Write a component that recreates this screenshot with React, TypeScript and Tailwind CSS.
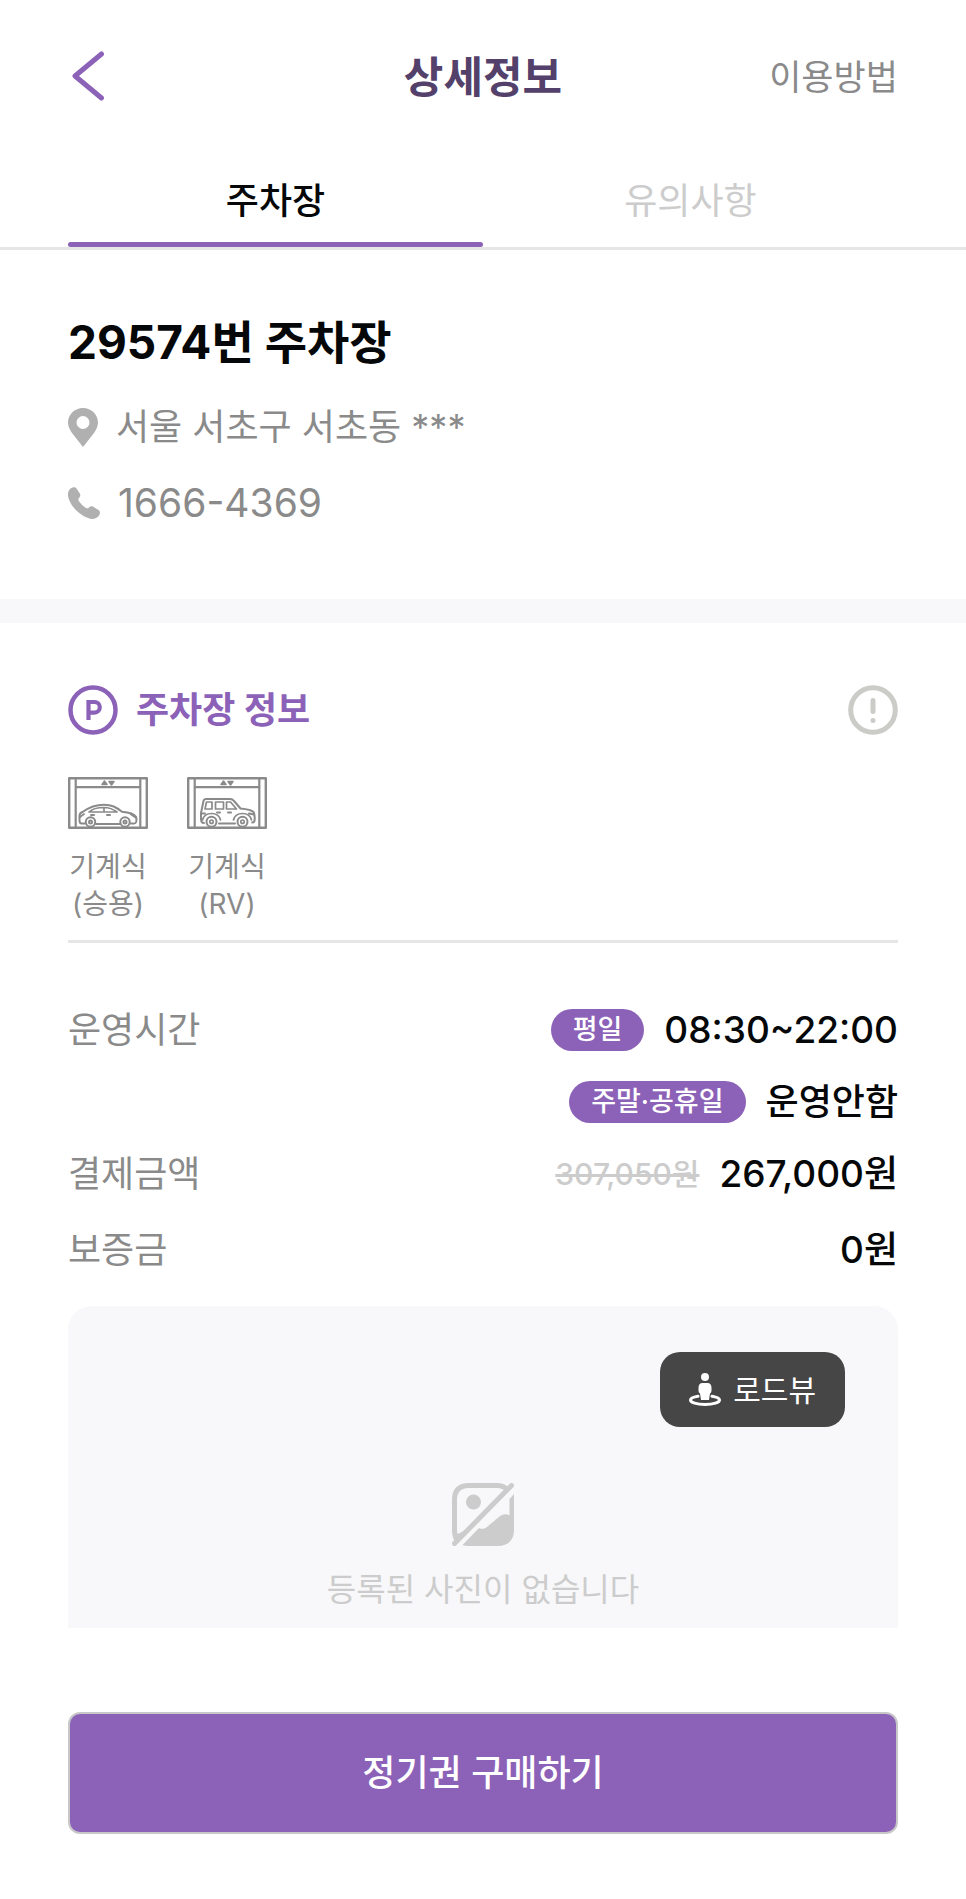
import { useState } from 'react';

const tabs = [
  { id: 'lot', label: '주차장' },
  { id: 'notice', label: '유의사항' }
];

function LiftFrame({ children }: { children: React.ReactNode }) {
  return (
    <svg viewBox="0 0 80 52" className="w-20 h-[52px]" fill="none" stroke="#8a8a8a" strokeWidth="2" strokeLinejoin="round" strokeLinecap="round" aria-hidden="true">
      <rect x="1.200" y="1.200" width="77.600" height="49.600" strokeWidth="2.400" />
      <path d="M7.700 1v50M72.300 1v50M8 10.200h64" strokeWidth="2.200" />
      <path d="M34 7.500h5l-2.500-3.500zM41 4.500h5L43.500 8z" fill="#8a8a8a" strokeWidth="1.500" />
      {children}
    </svg>
  );
}

function SedanIcon() {
  return (
    <LiftFrame>
      <path d="M17.500 46.500h-4c-1.500 0-2-1-2-3v-4.500c0-2 .7-3.300 3-4C20 31 26 27.700 36 27.700c8 0 12 2.500 18 7 7 .6 12 2 14 5 .7 2 .6 4 .2 5.300-.4 1-1.200 1.500-2.200 1.500h-3.500M28 47h24" />
      <path d="M21 35c3.500-3.500 8-4.500 15-4.500 6 0 9 1.500 13 4.500zM36 31v4M12 40l4-3M62.500 37l5 3.500" strokeWidth="1.700" />
      <path d="M23 38h3M39 38h3" />
      <circle cx="22.500" cy="45" r="4.700" />
      <circle cx="22.500" cy="45" r="1.500" />
      <circle cx="57" cy="45" r="4.700" />
      <circle cx="57" cy="45" r="1.500" />
    </LiftFrame>
  );
}

function RvIcon() {
  return (
    <LiftFrame>
      <path d="M17 46c-2 0-3-1.500-3-4v-6l2.500-12c.4-1.500 1-2 2.500-2h24c2 0 3 .6 4 2l6.500 7.500c6 .6 11 1.500 13 3.500 1 1.500 1.200 4 1.200 7.500 0 2-.6 3-2.500 3M32 46.500h16" />
      <path d="M19.500 25h5.500v7h-7zM28.500 25h8v7h-8zM39.500 25h4l6 7h-10z" strokeWidth="1.700" />
      <path d="M30 35.500h3M41 35.500h3M14 36.500h4M62 36.500l5 1" />
      <path d="M15.500 43c1-4 4.500-6.500 9-6.500s8 2.500 9 6.500M46.500 43c1-4 4.500-6.500 9-6.500s8 2.500 9 6.500" strokeWidth="1.700" />
      <circle cx="24.500" cy="44.700" r="5" />
      <circle cx="24.500" cy="44.700" r="1.700" strokeWidth="1.700" />
      <circle cx="55.500" cy="44.700" r="5" />
      <circle cx="55.500" cy="44.700" r="1.700" strokeWidth="1.700" />
    </LiftFrame>
  );
}

function PinIcon() {
  return (
    <svg viewBox="0 0 30 39" className="w-[30px] h-[39px]" fill="#b0b0b0" aria-hidden="true">
      <path fillRule="evenodd" d="M15 0C6.700 0 0 6.700 0 14.500 0 18.500 1.800 21.600 4 25l11 14 11-14c2.200-3.400 4-6.500 4-10.500C30 6.700 23.300 0 15 0zm0 8a6.500 6.500 0 1 1 0 13 6.500 6.500 0 0 1 0-13z" />
    </svg>
  );
}

function PhoneIcon() {
  return (
    <svg viewBox="0 0 32 32" className="w-8 h-8" fill="#b0b0b0" aria-hidden="true">
      <path d="M3 1.200C4.800 0 7.200-.3 8.500 1.400l3.300 5c1 1.800.5 3.200-.6 4.400-1 1-1.200 1.800-.5 2.900 1.800 2.900 4.300 5.400 7.400 7.200 1.100.6 1.900.4 2.900-.5 1.300-1.100 2.700-1.500 4.300-.6l5.200 3.300c1.900 1.300 1.700 3.600.5 5.400-2.400 3.400-6.400 4.300-11 2.600C10.800 27.400 4 20.500.9 12.300-.8 7.800-.3 3.600 3 1.200z" />
    </svg>
  );
}

function ParkingIcon() {
  return (
    <svg viewBox="0 0 50 50" className="w-[50px] h-[50px]" fill="none" stroke="#8c62b8" aria-hidden="true">
      <circle cx="25" cy="25" r="22.500" strokeWidth="4.500" />
      <path d="M20.500 35V17h6a5.300 5.300 0 0 1 0 10.600h-6" strokeWidth="4.200" />
    </svg>
  );
}

function RoadviewIcon() {
  return (
    <svg viewBox="0 0 32 33" className="w-8 h-[33px]" fill="#fff" aria-hidden="true">
      <circle cx="16" cy="4" r="4" />
      <path d="M13.500 10h5c2.500 0 4 1.800 4 4.500v3c0 1.500-.7 2.500-1.500 3l-1 6.500h-8l-1-6.500c-.8-.5-1.500-1.500-1.500-3v-3c0-2.700 1.500-4.500 4-4.500z" />
      <path d="M9 23.300c-4.500.8-7.500 2-7.500 3.700 0 2.500 6 4.500 14.500 4.500s14.500-2 14.500-4.500c0-1.700-3-2.900-7.500-3.700" fill="none" stroke="#fff" strokeWidth="3" strokeLinecap="round" />
    </svg>
  );
}

function NoPhotoIcon() {
  return (
    <svg viewBox="0 0 62 63" className="w-[62px] h-[63px]" aria-hidden="true">
      <path d="M5 57c-2-3-2.500-6-2.500-10V17C2.500 7.500 7.500 2.500 17 2.500h28c5 0 8 1.500 11 4.500" fill="none" stroke="#ccc" strokeWidth="5" />
      <circle cx="21.500" cy="19" r="7.500" fill="#ccc" />
      <path d="M4 53c6-1 11-5 17-11L56 7" fill="none" stroke="#ccc" strokeWidth="3" />
      <path d="M2.500 60.500l57-58" stroke="#ccc" strokeWidth="5" strokeLinecap="round" />
      <path d="M62 11v36c0 10-6 16-16 16H17c-3 0-5-.4-6.500-1L27 45c3 1.500 5.500 1 8.500-1.500l12-10c3.500-2.700 7-3 10-1V16z" fill="#ccc" />
    </svg>
  );
}

function Badge({ children }: { children: React.ReactNode }) {
  return (
    <span className="h-[42px] px-[22px] flex items-center rounded-full bg-[#8c62b8] text-white text-[27px] font-medium">
      {children}
    </span>
  );
}

export default function App() {
  const [activeTab, setActiveTab] = useState('lot');

  return (
    <div className="bg-white text-[#050708] text-[36px] leading-[44px] font-[Inter,'Noto_Sans_CJK_KR',sans-serif]">
      <header className="grid grid-cols-3 items-center h-[152px] px-[68px]">
        <button aria-label="뒤로" className="justify-self-start pl-1">
          <svg viewBox="0 0 34 50" className="w-[34px] h-[50px]" fill="none" stroke="#8c62b8" strokeWidth="5" strokeLinecap="round" strokeLinejoin="round">
            <path d="M29.500 3L3 25l26.500 22" />
          </svg>
        </button>
        <h1 className="pt-0.5 text-center text-[43px] font-bold text-[#53416b]">상세정보</h1>
        <button className="justify-self-end pt-0.5 text-[35px] text-[#8a8a8a]">이용방법</button>
      </header>

      <nav className="flex px-[68px] border-b-[3px] border-[#e6e6e6]">
        {tabs.map((tab) => (
          <button
            key={tab.id}
            onClick={() => setActiveTab(tab.id)}
            className={`flex-1 flex flex-col ${
              activeTab === tab.id ? 'text-[#050708] font-medium' : 'text-[#ccc]'
            }`}
          >
            <span className="w-full h-[90px] pt-2 flex items-center justify-center">{tab.label}</span>
            <span className={`w-full h-[5px] rounded-sm ${activeTab === tab.id ? 'bg-[#8c62b8]' : ''}`} />
          </button>
        ))}
      </nav>

      <section className="px-[68px] pt-[60px] pb-[74px] text-[#8a8a8a]">
        <h2 className="text-[46px] leading-[64px] font-bold text-[#050708]">29574번 주차장</h2>
        <p className="mt-[31px] flex items-center gap-[18px]">
          <PinIcon />
          <span>서울 서초구 서초동 ***</span>
        </p>
        <p className="mt-8 flex items-center gap-[18px]">
          <PhoneIcon />
          <a href="tel:1666-4369" className="text-[39px]">1666-4369</a>
        </p>
      </section>

      <div className="h-6 bg-[#f8f8fa]" />

      <section className="px-[68px] pt-[62px]">
        <div className="flex items-center justify-between">
          <h3 className="flex items-center gap-[18px] text-[#8c62b8] font-bold">
            <ParkingIcon />
            주차장 정보
          </h3>
          <button aria-label="안내">
            <svg viewBox="0 0 50 50" className="w-[50px] h-[50px]" fill="none" stroke="#cbccc8" strokeWidth="5" strokeLinecap="round">
              <circle cx="25" cy="25" r="22.300" />
              <path d="M25 15.500v11M25 35.500v.01" />
            </svg>
          </button>
        </div>

        <ul className="mt-[42px] pb-[17px] flex gap-[39px] border-b-[3px] border-[#e6e6e6] text-[#8a8a8a] text-[28px] leading-[37px] text-center">
          <li className="flex flex-col items-center gap-5">
            <SedanIcon />
            <span>기계식<br />(승용)</span>
          </li>
          <li className="flex flex-col items-center gap-5">
            <RvIcon />
            <span>기계식<br />(RV)</span>
          </li>
        </ul>

        <dl className="pt-[65px] pb-[34px] flex flex-col gap-7 font-medium">
          <div className="flex justify-between">
            <dt className="font-normal text-[#8a8a8a]">운영시간</dt>
            <dd className="flex flex-col items-end gap-7">
              <span className="flex items-center gap-5">
                <Badge>평일</Badge>
                <span className="text-[37px]">08:30~22:00</span>
              </span>
              <span className="flex items-center gap-5">
                <Badge>주말·공휴일</Badge>
                운영안함
              </span>
            </dd>
          </div>
          <div className="flex justify-between">
            <dt className="font-normal text-[#8a8a8a]">결제금액</dt>
            <dd className="flex items-center gap-5">
              <del className="text-[30px] text-[#ccc]">307,050원</del>
              <span className="text-[37px]">267,000원</span>
            </dd>
          </div>
          <div className="flex justify-between pt-1">
            <dt className="font-normal text-[#8a8a8a]">보증금</dt>
            <dd className="text-[37px]">0원</dd>
          </div>
        </dl>

        <div className="pt-[46px] pb-4 flex flex-col items-center rounded-t-3xl bg-[#f8f8fa] text-[#ccc]">
          <button className="self-end mr-[53px] h-[75px] px-[29px] flex items-center gap-3 rounded-[20px] bg-[#464646] text-white text-[30px]">
            <RoadviewIcon />
            로드뷰
          </button>
          <div className="mt-[56px]">
            <NoPhotoIcon />
          </div>
          <p className="mt-[22px] text-[32px]">등록된 사진이 없습니다</p>
        </div>
      </section>

      <div className="px-[68px] pt-[84px] pb-[65px]">
        <button className="w-full h-[122px] rounded-xl border-2 border-[#c8c8c8] bg-[#8c62b8] text-white font-medium">
          정기권 구매하기
        </button>
      </div>
    </div>
  );
}
